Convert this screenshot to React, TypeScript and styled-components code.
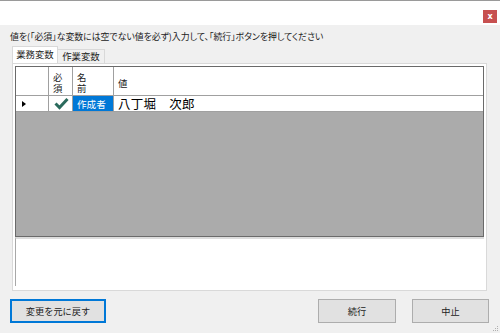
import React from "react";
import styled, { createGlobalStyle } from "styled-components";

const Global = createGlobalStyle`
  html, body { margin: 0; padding: 0; background: #f0f0f0; }
  body { font-family: "Noto Sans CJK JP", "Noto Sans", sans-serif; color: #000; }
  * { box-sizing: border-box; }
`;

const Window = styled.div`
  position: relative;
  width: 500px;
  height: 333px;
  border-top: 1px solid #9a9a9a;
  display: flex;
  flex-direction: column;
  background: #f0f0f0;
  overflow: hidden;
`;

const TitleBar = styled.div`
  height: 24px;
  background: #fff;
  display: flex;
  justify-content: flex-end;
  align-items: flex-start;
  padding: 9px 3px 0 0;
`;

const CloseBtn = styled.div`
  width: 14px;
  height: 13px;
  background: #c75050;
  color: #fff;
  font-family: "DejaVu Sans", sans-serif;
  font-size: 8px;
  font-weight: bold;
  line-height: 13px;
  text-align: center;
`;

const Body = styled.div`
  flex: 1;
  display: flex;
  flex-direction: column;
  padding: 0 10px 10px 10px;
`;

const Instruction = styled.div`
  margin-top: 6px;
  height: 12px;
  font-size: 8.9px;
  line-height: 12px;
  color: #222;
  white-space: nowrap;
  font-feature-settings: "palt";
`;

const TabStrip = styled.div`
  display: flex;
  align-items: flex-end;
  margin-top: 3px;
  margin-left: 2px;
  height: 17px;
`;

const Tab = styled.div<{ $active?: boolean }>`
  height: ${(p) => (p.$active ? 17 : 14)}px;
  width: ${(p) => (p.$active ? 46 : 47)}px;
  background: ${(p) => (p.$active ? "#fff" : "#f0f0f0")};
  border: 1px solid #d9d9d9;
  border-bottom: none;
  ${(p) => (p.$active ? "" : "border-left: none;")}
  font-size: 9.4px;
  line-height: ${(p) => (p.$active ? 15 : 13)}px;
  text-align: center;
  color: #222;
`;

const Panel = styled.div`
  margin-left: 2px;
  width: 475px;
  height: 228px;
  background: #fff;
  border: 1px solid #d9d9d9;
  padding: 2px;
  display: flex;
  flex-direction: column;
`;

const Grid = styled.div`
  height: 171px;
  border: 1px solid #6a6a6a;
  display: flex;
  flex-direction: column;
  background: #ababab;
`;

const Row = styled.div<{ $h: number }>`
  display: flex;
  height: ${(p) => p.$h}px;
  background: #fff;
  border-bottom: 1px solid #a0a0a0;
`;

const Cell = styled.div<{ $w?: number; $sel?: boolean }>`
  ${(p) => (p.$w ? `width: ${p.$w}px;` : "flex: 1;")}
  border-right: 1px solid #a0a0a0;
  display: flex;
  align-items: center;
  padding-left: 4px;
  background: ${(p) => (p.$sel ? "#0078d7" : "#fff")};
  color: ${(p) => (p.$sel ? "#fff" : "#000")};
  &:last-child { border-right: none; }
`;

const HeadText = styled.div`
  font-size: 9.4px;
  line-height: 11px;
  color: #222;
  width: 11px;
  word-break: break-all;
  margin-top: 4px;
`;

const SmallText = styled.span`
  font-size: 9.6px;
`;

const ValueText = styled.span`
  font-size: 12.5px;
  letter-spacing: 0.3px;
`;

const Filler = styled.div`
  flex: 1;
  background: #ababab;
`;

const Below = styled.div`
  flex: 1;
  border-left: 1px solid #a8a8a8;
  border-top: 2px solid #dcdcdc;
  margin-bottom: 2px;
`;

const ButtonRow = styled.div`
  margin-top: 8px;
  display: flex;
  align-items: center;
`;

const Button = styled.div<{ $w: number; $focus?: boolean }>`
  width: ${(p) => p.$w}px;
  height: 24px;
  background: #e1e1e1;
  border: ${(p) => (p.$focus ? "2px solid #0078d7" : "1px solid #adadad")};
  font-size: 9.2px;
  color: #222;
  display: flex;
  align-items: center;
  justify-content: center;
`;

const Spacer = styled.div`
  flex: 1;
`;

const Gap = styled.div<{ $w: number }>`
  width: ${(p) => p.$w}px;
`;

const Grip = styled.svg`
  position: absolute;
  right: 1px;
  bottom: 1px;
`;

export default function App() {
  return (
    <>
      <Global />
      <Window>
        <TitleBar>
          <CloseBtn>x</CloseBtn>
        </TitleBar>
        <Body>
          <Instruction>
            値を(「必須」な変数には空でない値を必ず)入力して、「続行」ボタンを押してください
          </Instruction>
          <TabStrip>
            <Tab $active>業務変数</Tab>
            <Tab>作業変数</Tab>
          </TabStrip>
          <Panel>
            <Grid>
              <Row $h={29}>
                <Cell $w={33} />
                <Cell $w={24}>
                  <HeadText>必須</HeadText>
                </Cell>
                <Cell $w={41}>
                  <HeadText>名前</HeadText>
                </Cell>
                <Cell>
                  <HeadText>値</HeadText>
                </Cell>
              </Row>
              <Row $h={16}>
                <Cell $w={33}>
                  <svg width="8" height="8" viewBox="0 0 8 8">
                    <polygon points="2,1 6,4 2,7" fill="#000" />
                  </svg>
                </Cell>
                <Cell $w={24} style={{ paddingLeft: 5 }}>
                  <svg width="15" height="13" viewBox="0 0 15 13">
                    <polyline
                      points="1.5,6.5 5.5,10.5 13.5,2"
                      fill="none"
                      stroke="#2a6a5c"
                      strokeWidth="3"
                    />
                  </svg>
                </Cell>
                <Cell $w={41} $sel>
                  <SmallText>作成者</SmallText>
                </Cell>
                <Cell>
                  <ValueText>八丁堀　次郎</ValueText>
                </Cell>
              </Row>
              <Filler />
            </Grid>
            <Below />
          </Panel>
          <ButtonRow>
            <Button $w={96} $focus>
              変更を元に戻す
            </Button>
            <Spacer />
            <Button $w={78}>続行</Button>
            <Gap $w={16} />
            <Button $w={77}>中止</Button>
            <Gap $w={1} />
          </ButtonRow>
        </Body>
        <Grip width="8" height="8" viewBox="0 0 8 8">
          <rect x="6" y="2" width="1" height="1" fill="#b0b0b0" />
          <rect x="4" y="4" width="1" height="1" fill="#b0b0b0" />
          <rect x="6" y="4" width="1" height="1" fill="#b0b0b0" />
          <rect x="2" y="6" width="1" height="1" fill="#b0b0b0" />
          <rect x="4" y="6" width="1" height="1" fill="#b0b0b0" />
          <rect x="6" y="6" width="1" height="1" fill="#b0b0b0" />
        </Grip>
      </Window>
    </>
  );
}
